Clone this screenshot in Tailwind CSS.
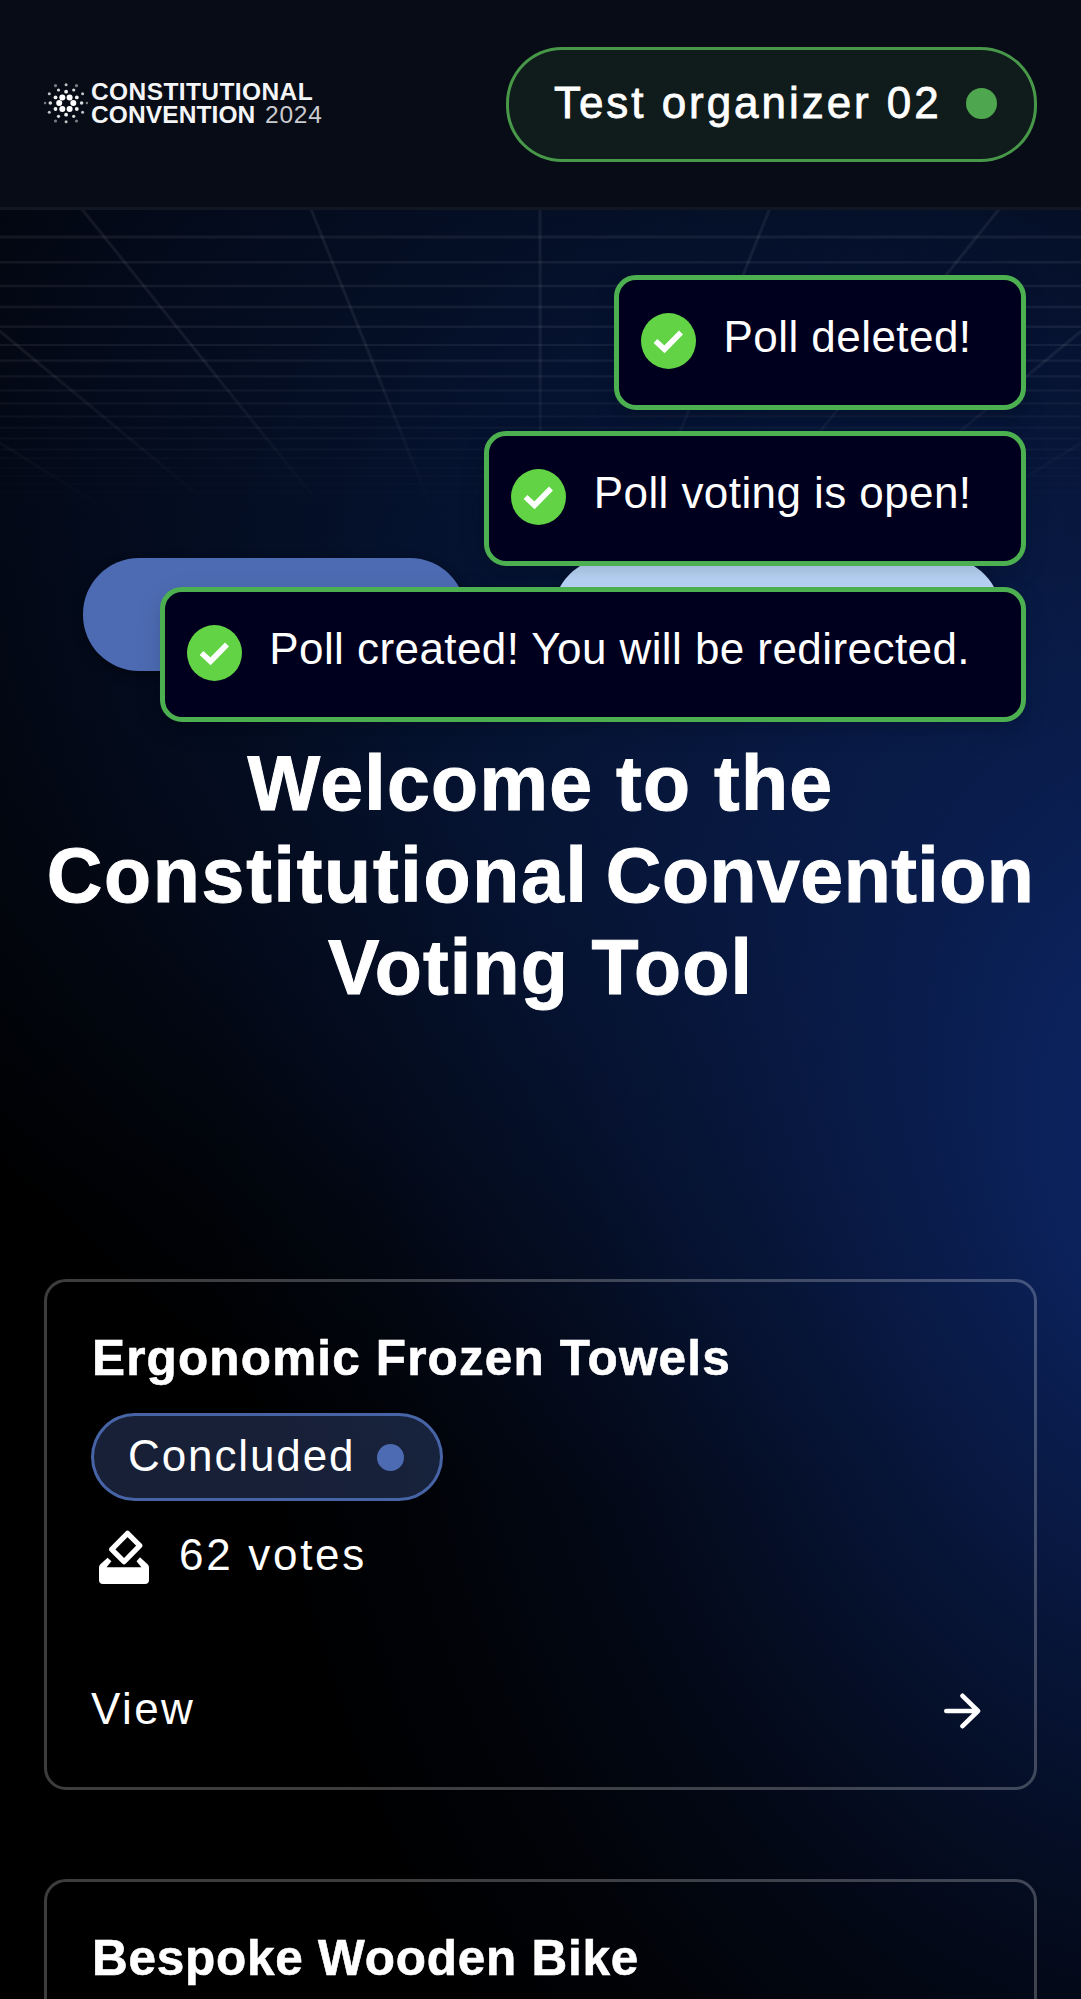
<!DOCTYPE html>
<html lang="en">
<head>
<meta charset="utf-8">
<title>Constitutional Convention Voting Tool</title>
<script src="https://cdn.jsdelivr.net/npm/@tailwindcss/browser@4"></script>
</head>
<body class="bg-black">
<div class="relative h-[1999px] w-[1081px] overflow-hidden bg-black bg-[radial-gradient(ellipse_1000px_1350px_at_1210px_1150px,rgba(13,39,105,1)_0%,rgba(13,39,105,0.86)_15%,rgba(13,39,105,0.66)_30%,rgba(13,39,105,0.46)_45%,rgba(13,39,105,0.24)_63%,rgba(13,39,105,0.07)_83%,rgba(13,39,105,0)_100%),radial-gradient(ellipse_820px_900px_at_620px_600px,rgba(6,21,54,0.85)_0%,rgba(6,21,54,0.72)_30%,rgba(6,21,54,0.36)_65%,rgba(6,21,54,0.12)_85%,rgba(6,21,54,0)_100%),linear-gradient(to_bottom,#02050d_0%,#02050d_25%,#000_60%)] font-['Liberation_Sans',sans-serif] text-white">

  <!-- perspective grid -->
  <svg class="absolute top-[208px] left-0" width="1081" height="310" viewBox="0 208 1081 310" fill="none">
    <defs>
      <linearGradient id="fade" x1="0" y1="208" x2="0" y2="510" gradientUnits="userSpaceOnUse">
        <stop offset="0" stop-color="#fff" stop-opacity=".062"/>
        <stop offset=".5" stop-color="#fff" stop-opacity=".062"/>
        <stop offset="1" stop-color="#fff" stop-opacity="0"/>
      </linearGradient>
    </defs>
    <g fill="url(#fade)">
      <path d="M0 235.5h1081v3H0zM0 261h1081v2.600H0zM0 284.700h1081v2.500H0zM0 305.800h1081v2.500H0zM0 325.500h1081v2.500H0zM0 344h1081v2H0zM0 359.600h1081v2.200H0zM0 375.300h1081v2.200H0zM0 389.400h1081v2H0zM0 402.500h1081v2H0zM0 415.600h1081v2H0zM0 426.700h1081v2H0zM0 437.400h1081v2H0zM0 448.400h1081v2H0zM0 457.500h1081v1.500H0zM0 467h1081v1.500H0zM0 475h1081v1.500H0zM0 483.400h1081v1.500H0zM0 491.600h1081v1.500H0zM0 498h1081v1.500H0z"/>
    </g>
    <path stroke="url(#fade)" stroke-width="3" d="M81 208L540 778M310.500 208L540 778M-149 208L540 778M-379 208L540 778M540 208L541 778M770 208L541 778M1000 208L541 778M1230 208L541 778M1460 208L541 778"/>
  </svg>

  <header class="relative flex h-[210px] items-center justify-between border-b-3 border-[#111723] bg-[#080c16] pr-[44px] pl-[44px]">
    <div class="flex items-center">
      <svg class="mb-[2px] h-[44px] w-[44px]" viewBox="0 0 44 44" fill="#fff">
        <g><circle cx="15.200" cy="22" r="3"/><circle cx="18.300" cy="16.400" r="3"/><circle cx="25.600" cy="16.400" r="3"/><circle cx="29.300" cy="22" r="3"/><circle cx="25.600" cy="28" r="3"/><circle cx="18.300" cy="28" r="3"/></g>
        <g opacity=".95"><circle cx="11.500" cy="16.400" r="1.900"/><circle cx="22.100" cy="10.700" r="1.900"/><circle cx="32.800" cy="16.400" r="1.900"/><circle cx="32.800" cy="28" r="1.900"/><circle cx="22.100" cy="33.700" r="1.900"/><circle cx="11.500" cy="28" r="1.900"/></g>
        <g opacity=".85"><circle cx="6.300" cy="22" r="1.800"/><circle cx="14.500" cy="9" r="1.600"/><circle cx="29.700" cy="9" r="1.600"/><circle cx="37.600" cy="22" r="1.800"/><circle cx="29.700" cy="35.300" r="1.600"/><circle cx="14.500" cy="35.300" r="1.600"/></g>
        <g opacity=".75"><circle cx="5.300" cy="12.700" r="1.500"/><circle cx="38.600" cy="12.700" r="1.500"/><circle cx="5.300" cy="31.300" r="1.500"/><circle cx="38.600" cy="31.300" r="1.500"/><circle cx="22.100" cy="3.700" r="1.500"/><circle cx="22.100" cy="40.700" r="1.500"/></g>
        <g opacity=".45"><circle cx="11.500" cy="4.700" r="1.600"/><circle cx="32.500" cy="4.700" r="1.600"/><circle cx="11.500" cy="40" r="1.600"/><circle cx="32.500" cy="40" r="1.600"/><circle cx="1" cy="22" r="1.300"/><circle cx="43" cy="22" r="1.300"/></g>
      </svg>
      <div class="mb-px ml-[3px] text-[24.5px] leading-[23.500px] font-bold whitespace-nowrap text-[#f4f5f6]">
        <div class="tracking-[0.4px]">CONSTITUTIONAL</div>
        <div class="flex"><span class="w-[174px] tracking-[0.1px]">CONVENTION</span><span class="font-normal tracking-[0.8px] text-[#c9cbd0]">2024</span></div>
      </div>
    </div>
    <div class="mt-[1px] flex h-[115px] w-[531px] items-center justify-between rounded-[56px] border-3 border-[#4ea64e]/90 bg-[#101c1c] pr-[37px] pl-[45px]">
      <span class="pb-[3px] text-[44px] leading-[60px] tracking-[2.95px] whitespace-nowrap [-webkit-text-stroke:0.8px_white]">Test organizer 02</span>
      <span class="mb-px size-[31px] rounded-full bg-[#4ea64e]"></span>
    </div>
  </header>

  <main class="relative flex flex-col pt-[348px]">
    <div class="flex gap-[87px] pl-[83px]">
      <div class="h-[113px] w-[383px] rounded-[56px] bg-[#4d6bb3] shadow-[0_4px_11px_rgba(0,0,0,0.4)]"></div>
      <div class="h-[113px] w-[448px] rounded-[56px] bg-[#bcd8fb] shadow-[0_4px_11px_rgba(0,0,0,0.4)]"></div>
    </div>
    <h1 class="mt-[66px] text-center text-[77px] leading-[92px] font-bold whitespace-nowrap [-webkit-text-stroke:1px_white]">
      <span class="block tracking-[1.3px]">Welcome to the</span>
      <span class="block tracking-[0.5px]"><span class="tracking-[1.75px] [word-spacing:-6px]">Constitutional </span>Convention</span>
      <span class="block tracking-[1.2px]">Voting Tool</span>
    </h1>

    <section class="mt-[266px] flex flex-col gap-[89px] px-[44px]">
      <article class="flex h-[511px] flex-col items-start rounded-[22px] border-3 border-white/24 pt-[46px] pr-[53px] pl-[44px]">
        <h2 class="pl-[1px] text-[49.5px] leading-[60px] font-bold tracking-[1.15px] whitespace-nowrap [-webkit-text-stroke:0.6px_white]">Ergonomic Frozen Towels</h2>
        <div class="mt-[25px] flex h-[88px] w-[352px] items-center justify-between rounded-[44px] border-3 border-[#4d6bb3]/90 bg-[#4d6bb3]/30 pr-[36px] pl-[34px]">
          <span class="pb-[2px] text-[44px] leading-[60px] tracking-[1.9px]">Concluded</span>
          <span class="size-[27px] rounded-full bg-[#4d6bb3]"></span>
        </div>
        <div class="mt-[24px] flex h-[60px] items-center pl-[8px]">
          <svg class="mt-[4px] h-[54px] w-[50px]" viewBox="0 0 50 54" fill="#fff">
            <path d="M28.500 3.300L40.800 15.600 25 31.700 12.700 19.300z" fill="none" stroke="#fff" stroke-width="5.200" stroke-linejoin="round"/>
            <path d="M8.600 27.700L12.400 31.200 7.600 37.300H42.400L37.500 31.200 41 27.300 48.600 34.300Q50 35.600 50 37.500V50a4 4 0 0 1-4 4H4a4 4 0 0 1-4-4V37.500Q0 35.600 1.400 34.300z"/>
          </svg>
          <span class="ml-[30px] text-[44px] leading-[60px] tracking-[2.7px]">62 votes</span>
        </div>
        <div class="mt-[94px] flex h-[60px] w-full items-center justify-between">
          <span class="text-[44px] leading-[60px] tracking-[2.4px]">View</span>
          <svg class="mt-[3px] h-[36px] w-[38px]" viewBox="0 0 38 36" fill="none" stroke="#fff" stroke-width="4.600" stroke-linecap="round" stroke-linejoin="round"><path d="M3.300 18H35M19.500 2.800L35 18 19.500 33.200"/></svg>
        </div>
      </article>
      <article class="flex h-[511px] flex-col items-start rounded-[22px] border-3 border-white/24 pt-[46px] pr-[53px] pl-[44px]">
        <h2 class="pl-[1px] text-[49.5px] leading-[60px] font-bold tracking-[0.75px] whitespace-nowrap [-webkit-text-stroke:0.6px_white]">Bespoke Wooden Bike</h2>
      </article>
    </section>
  </main>

  <!-- toasts -->
  <div class="absolute top-[275px] right-[55px] flex flex-col items-end gap-[21px] text-[44px]">
    <div class="flex h-[135px] items-center rounded-[22px] border-[5.500px] border-[#4caf50] bg-[#00001e] px-[22px] shadow-[0_8px_27px_rgba(0,0,0,0.1),0_8px_8px_rgba(0,0,0,0.05)]">
      <svg class="mb-[3px] h-[56px] w-[55px]" viewBox="0 0 55 56" fill="none"><ellipse cx="27.500" cy="28" rx="27.500" ry="28" fill="#61d345"/><path d="M14.500 28L23.500 36.300 40 19.500" stroke="#fff" stroke-width="5.500"/></svg>
      <span class="px-[27.500px] pb-[11px] leading-[60px] tracking-[0.45px] whitespace-nowrap">Poll deleted!</span>
    </div>
    <div class="flex h-[135px] items-center rounded-[22px] border-[5.500px] border-[#4caf50] bg-[#00001e] px-[22px] shadow-[0_8px_27px_rgba(0,0,0,0.1),0_8px_8px_rgba(0,0,0,0.05)]">
      <svg class="mb-[3px] h-[56px] w-[55px]" viewBox="0 0 55 56" fill="none"><ellipse cx="27.500" cy="28" rx="27.500" ry="28" fill="#61d345"/><path d="M14.500 28L23.500 36.300 40 19.500" stroke="#fff" stroke-width="5.500"/></svg>
      <span class="px-[27.500px] pb-[11px] leading-[60px] tracking-[0.42px] whitespace-nowrap">Poll voting is open!</span>
    </div>
    <div class="flex h-[135px] items-center rounded-[22px] border-[5.500px] border-[#4caf50] bg-[#00001e] px-[22px] shadow-[0_8px_27px_rgba(0,0,0,0.1),0_8px_8px_rgba(0,0,0,0.05)]">
      <svg class="mb-[3px] h-[56px] w-[55px]" viewBox="0 0 55 56" fill="none"><ellipse cx="27.500" cy="28" rx="27.500" ry="28" fill="#61d345"/><path d="M14.500 28L23.500 36.300 40 19.500" stroke="#fff" stroke-width="5.500"/></svg>
      <span class="pr-[29px] pb-[11px] pl-[27.500px] leading-[60px] tracking-[0.43px] whitespace-nowrap">Poll created! You will be redirected.</span>
    </div>
  </div>
</div>
</body>
</html>
